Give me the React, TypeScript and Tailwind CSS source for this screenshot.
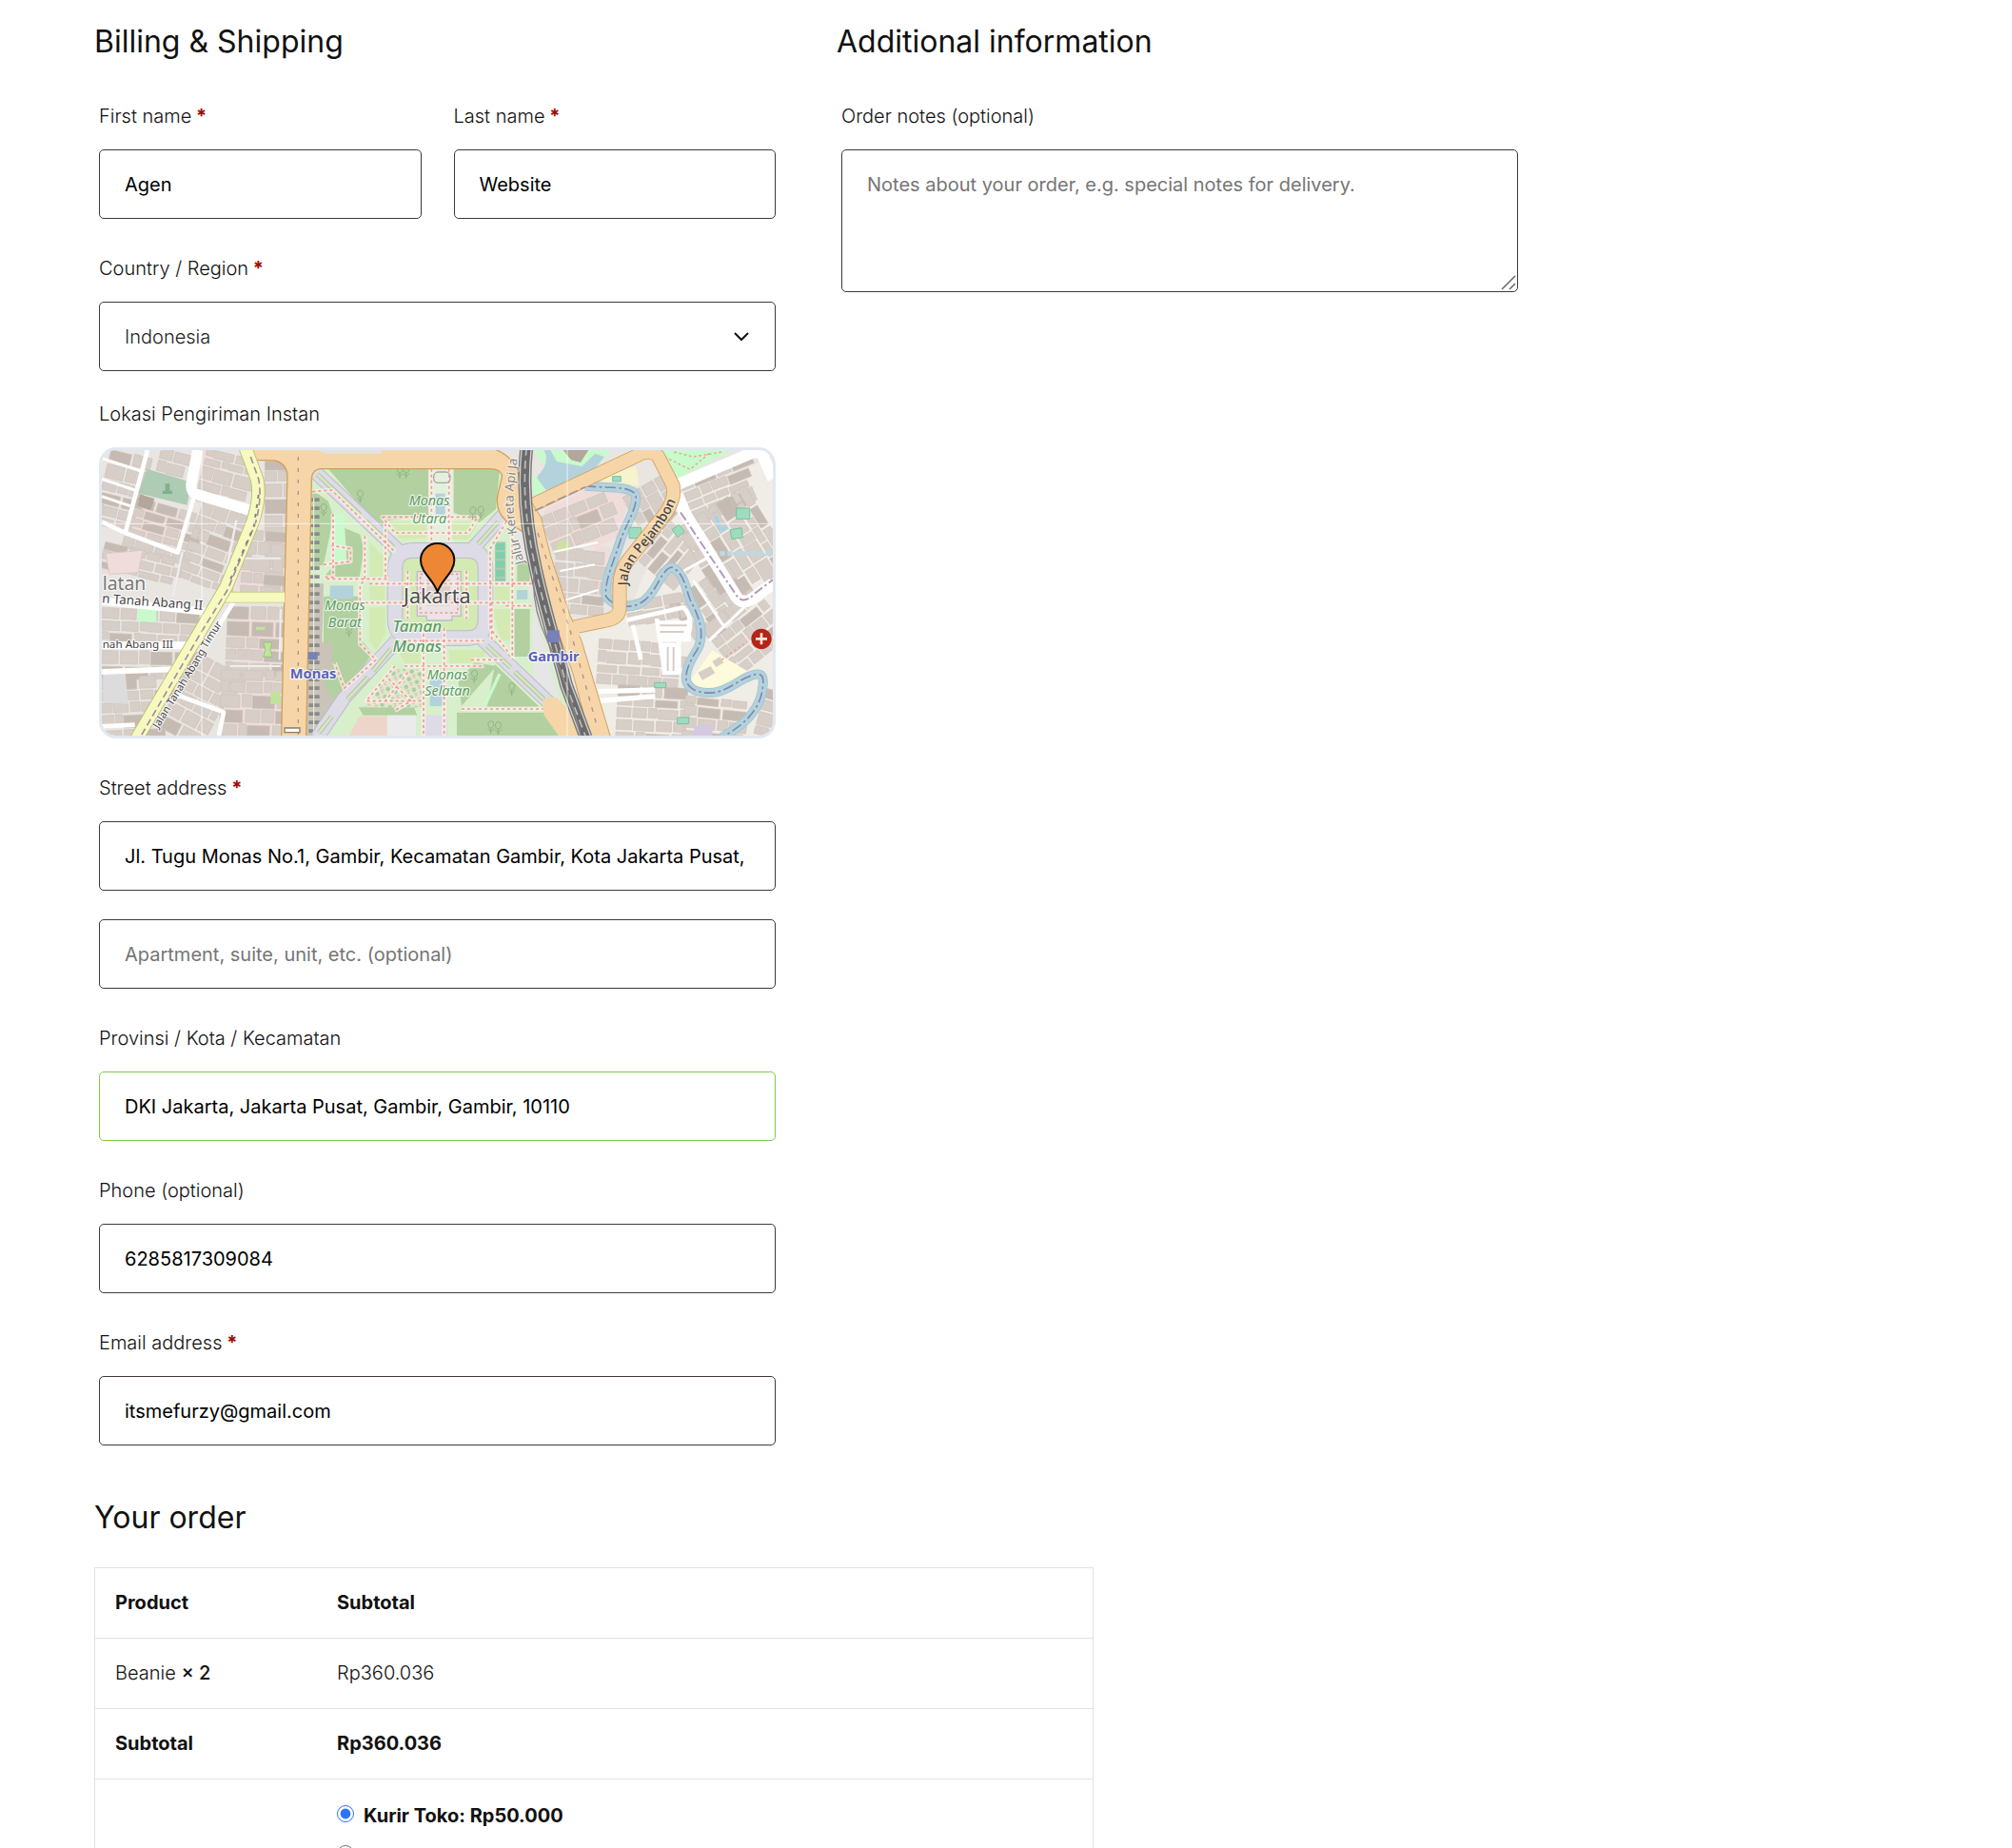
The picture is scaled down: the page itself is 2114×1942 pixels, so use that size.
import type { ReactNode } from "react";

const fieldClass =
  "h-[73px] w-full rounded-[5px] border border-[#43363a] bg-white px-[26px] text-xl text-black placeholder:text-[#757575] focus:outline-none";

type FieldProps = {
  id: string;
  label: string;
  required?: boolean;
  children: ReactNode;
};

const Field = ({ id, label, required, children }: FieldProps) => (
  <div className="flex flex-col gap-[19px]">
    <label htmlFor={id} className="text-xl leading-8 font-light text-[#111]">
      {label}
      {required && <span className="font-bold text-[#a00b00]"> *</span>}
    </label>
    {children}
  </div>
);

type Block = {
  x: number;
  y: number;
  w: number;
  h: number;
  angle: number;
  seed: number;
};

// City blocks, each filled with rows of small buildings
const blocks: Block[] = [
  { x: 36, y: 45, w: 125, h: 240, angle: 14, seed: 3 },
  { x: 120, y: 205, w: 190, h: 150, angle: 16, seed: 7 },
  { x: 215, y: 40, w: 90, h: 75, angle: 14, seed: 5 },
  { x: 350, y: 45, w: 140, h: 150, angle: 14, seed: 9 },
  { x: 310, y: 215, w: 160, h: 260, angle: 20, seed: 4 },
  { x: 36, y: 350, w: 230, h: 80, angle: 14, seed: 8 },
  { x: 36, y: 540, w: 300, h: 95, angle: 3, seed: 6 },
  { x: 36, y: 670, w: 240, h: 60, angle: 1, seed: 2 },
  { x: 36, y: 750, w: 180, h: 190, angle: -3, seed: 11 },
  { x: 550, y: 70, w: 62, h: 400, angle: 0, seed: 12 },
  { x: 480, y: 290, w: 120, h: 180, angle: 4, seed: 13 },
  { x: 430, y: 530, w: 170, h: 180, angle: 2, seed: 14 },
  { x: 270, y: 690, w: 140, h: 250, angle: 28, seed: 15 },
  { x: 410, y: 730, w: 180, h: 210, angle: 2, seed: 16 },
  { x: 1430, y: 210, w: 190, h: 110, angle: -22, seed: 17 },
  { x: 1460, y: 350, w: 150, h: 200, angle: 6, seed: 18 },
  { x: 1720, y: 110, w: 90, h: 160, angle: 60, seed: 19 },
  { x: 1720, y: 270, w: 160, h: 150, angle: -50, seed: 20 },
  { x: 1870, y: 100, w: 200, h: 110, angle: -22, seed: 21 },
  { x: 1900, y: 190, w: 240, h: 260, angle: 58, seed: 22 },
  { x: 1900, y: 400, w: 120, h: 200, angle: 55, seed: 23 },
  { x: 1960, y: 520, w: 190, h: 180, angle: -38, seed: 24 },
  { x: 1600, y: 640, w: 250, h: 130, angle: 4, seed: 25 },
  { x: 1660, y: 780, w: 220, h: 160, angle: 3, seed: 26 },
  { x: 1870, y: 820, w: 180, h: 120, angle: 6, seed: 27 },
  { x: 2110, y: 790, w: 60, h: 150, angle: 15, seed: 28 },
  { x: 1690, y: 500, w: 170, h: 80, angle: -10, seed: 29 },
];

const noise = (n: number) => {
  const v = Math.sin(n * 127.1) * 43758.5453;
  return v - Math.floor(v);
};

const CityBlock = ({ x, y, w, h, angle, seed }: Block) => {
  const cells: ReactNode[] = [];
  let top = y;
  let row = 0;
  while (top < y + h) {
    const rowH = 18 + noise(seed + row) * 28;
    let left = x;
    let col = 0;
    while (left < x + w) {
      const n = noise(seed * 31 + row * 17 + col);
      const cellW = 18 + n * 56;
      cells.push(
        <rect
          key={`${row}-${col}`}
          x={left}
          y={top + n * 5}
          width={cellW}
          height={rowH}
          fill={n > 0.82 ? "#c6bbb3" : "#d7cec8"}
          stroke="#cdc3bc"
          strokeWidth="2"
        />
      );
      left += cellW + 3 + n * 7;
      col += 1;
    }
    top += rowH + 8;
    row += 1;
  }
  return <g transform={`rotate(${angle} ${x + w / 2} ${y + h / 2})`}>{cells}</g>;
};

type RoadProps = {
  d: string;
  width: number;
  fill: string;
  edge: string;
};

const Road = ({ d, width, fill, edge }: RoadProps) => (
  <g fill="none" strokeLinejoin="round">
    <path d={d} stroke={edge} strokeWidth={width + 5} />
    <path d={d} stroke={fill} strokeWidth={width} />
  </g>
);

const canal =
  "M1560 152 C1620 160 1690 150 1715 175 C1735 200 1690 270 1672 320 C1650 390 1620 450 1625 500 C1650 535 1710 545 1750 510 C1790 475 1800 415 1832 408 C1880 430 1875 490 1900 530 C1930 590 1935 640 1905 680 C1870 740 1865 780 1910 798 C1980 820 2020 780 2060 760 C2100 740 2125 735 2120 780 C2115 850 2070 900 1990 945";

const railway = "M1375 30 C1360 160 1375 290 1405 420 C1430 540 1475 680 1500 780 L1562 945";

const monumentRing =
  "M1020 355 H1185 Q1245 355 1245 415 V570 Q1245 632 1185 632 H1020 Q960 632 960 570 V415 Q960 355 1020 355 Z";

const avenues =
  "M700 100 L970 355 M1300 245 L1205 350 M965 640 L800 820 L715 945 M1235 635 L1450 840";

const medians =
  "M715 115 L850 243 M868 262 L955 345 M1285 265 L1222 335 M948 665 L890 735 M875 755 L810 825 M760 880 L720 930 M1250 655 L1325 725 M1338 738 L1430 825";

const parkPaths = [
  "M700 170 L760 165 L960 360",
  "M765 240 V440 H735",
  "M735 400 L820 390 V350 L760 340",
  "M865 310 V440 L850 470 V650 L900 700 L800 790 L770 710",
  "M930 270 V440",
  "M745 445 H940",
  "M830 520 H1320",
  "M880 460 H1390",
  "M1075 98 V330 M1130 98 V330",
  "M920 250 H1220 L1190 300 H960 Z",
  "M1320 250 L1260 350 V600 L1320 680",
  "M1265 520 V640 M1330 300 V700",
  "M1310 460 H1390 M1310 530 H1390",
  "M965 640 H1240 M990 720 H1240",
  "M1050 600 V939 M1115 600 V939",
  "M960 720 L870 830 H1050",
  "M1170 855 H1430",
  "M940 760 L1010 830 L960 860 M1000 740 L930 830",
  "M1000 420 V570 M1185 420 V570",
  "M1200 700 L1300 700",
];

const trees = [
  [735, 230],
  [850, 187],
  [975, 110],
  [995, 110],
  [1205, 240],
  [1230, 238],
  [815, 610],
  [1210, 755],
  [1328, 795],
  [1262, 915],
  [1285, 918],
];

const DeliveryMap = () => (
  <svg
    viewBox="36 39 2115 900"
    preserveAspectRatio="xMidYMid slice"
    className="h-full w-full"
    fontFamily="'Noto Sans', sans-serif"
    role="img"
    aria-label="Peta Jakarta"
  >
    <defs>
      <path id="jalan-timur" d="M214 918 L345 706 Q400 600 450 545" />
      <path id="jalan-pejambon" d="M1693 466 C1690 400 1740 360 1775 315 Q1830 245 1850 185" />
      <path id="jalur-kereta" d="M1368 395 C1350 330 1325 240 1336 150 L1352 20" />
      <pattern id="garden" width="26" height="26" patternUnits="userSpaceOnUse" patternTransform="rotate(20)">
        <rect width="26" height="26" fill="#dfe9d0" />
        <circle cx="8" cy="8" r="7" fill="#a9cfa0" />
        <path d="M14 20 L22 14 M18 24 L25 22" stroke="#f19a90" strokeWidth="3" />
      </pattern>
    </defs>

    <rect x="36" y="39" width="2115" height="900" fill="#e9e5e1" />
    <path d="M1850 180 L2151 60 V939 H1640 L1500 600 L1700 540 Z" fill="#f0ece6" />

    {/* Pink and cream land use */}
    <g fill="#f0dcdb">
      <path d="M150 215 L305 245 L270 350 L120 300 Z" />
      <path d="M36 345 L180 370 L150 430 L36 430 Z" />
      <path d="M350 39 L400 39 L410 110 L350 120 Z" />
      <path d="M470 380 L600 400 V480 H460 Z" />
      <path d="M450 540 H600 V720 L440 700 Z" />
      <path d="M430 750 L590 740 V939 H420 Z" />
      <path d="M1430 230 L1560 165 L1700 175 L1670 310 L1600 340 L1450 340 Z" />
      <path d="M1590 330 L1640 350 L1610 500 L1580 480 Z" />
    </g>
    <path d="M1600 120 L1720 90 L1730 150 L1640 160 Z" fill="#f6f3cf" />

    {blocks.map((block) => (
      <CityBlock key={block.seed} {...block} />
    ))}

    <path d="M1885 775 L1960 670 L2070 735 L2010 780 L1930 795 Z" fill="#fdfbdc" />
    <path d="M1915 740 l40 -20 14 22 -40 22 Z M1960 705 l24 -14 12 18 -24 14 Z" fill="#d7cec8" />
    <path d="M178 98 L318 140 L305 212 L150 175 Z" fill="#aecbb4" />
    <path d="M236 145 h14 v22 h8 v10 h-30 v-10 h8 Z" fill="#7fb08b" />
    <path d="M148 532 H208 V580 H148 Z" fill="#c8facc" />
    <path d="M155 178 L202 192 L190 228 L150 215 Z" fill="#b3a69b" />
    <path d="M48 365 L165 355 L150 425 L60 430 Z" fill="#f0dcdb" stroke="#d6cccb" strokeWidth="3" />
    <path d="M40 745 L110 745 L120 840 L40 835 Z" fill="#dcdcdc" />
    <path d="M545 645 h28 l-6 22 6 24 h-28 l6 -24 Z" fill="#bfe39a" stroke="#9cc27a" strokeWidth="3" />
    <path d="M522 596 h28 v10 h-28 Z" fill="#bfe39a" />
    <path d="M568 800 h30 v40 h-30 Z" fill="#bfe39a" />
    <path d="M1475 325 h35 v35 h-45 Z" fill="#cfdfa5" />

    {/* White streets west */}
    <g fill="none" stroke="#fff" strokeWidth="14" strokeLinejoin="round">
      <path d="M180 39 L110 300 L36 265" />
      <path d="M110 300 L275 362 L325 190" />
      <path d="M36 65 L160 105 M36 130 L140 165 M36 185 L125 215" strokeWidth="9" />
      <path d="M36 515 L380 550 M36 655 H340" strokeWidth="24" />
      <path d="M36 738 L260 730" strokeWidth="18" />
      <path d="M270 810 L420 865 L405 939" />
      <path d="M36 910 L140 905" />
      <path d="M450 520 L400 600" />
      <path d="M290 360 L260 500 M460 260 L420 460" strokeWidth="7" stroke="#eee" />
      <path d="M480 380 H600 M440 720 H600 M600 540 L596 700" strokeWidth="6" stroke="#eee" />
      <path d="M338 39 L318 145 Q315 175 340 180 L500 228" strokeWidth="34" />
    </g>

    {/* Park */}
    <path d="M695 95 H1290 L1330 280 L1380 480 L1470 760 L1560 939 H680 Z" fill="#d8efcc" />
    <path d="M765 240 L800 240 L800 440 L770 440 Z" fill="#c8facc" />
    <path d="M1060 98 H1145 V330 H1060 Z" fill="#e4efdc" />
    <path d="M1400 540 L1440 700 L1480 830 L1400 760 L1390 600 Z" fill="#e6e6e6" />
    <g fill="#b3d0a0">
      <path d="M750 98 H1065 V245 L930 262 L915 290 Z" />
      <path d="M1145 98 H1290 L1278 225 L1225 268 L1145 236 Z" />
      <path d="M700 165 L750 200 L766 250 L735 400 L700 410 Z" />
      <path d="M802 285 L850 305 L862 350 L848 440 H735 L770 400 L808 390 Z" />
      <path d="M735 500 H848 L855 640 L890 680 L800 800 L770 830 L735 770 Z" />
      <path d="M1275 715 L1415 848 H1250 Z" />
      <path d="M1170 845 L1280 720 L1210 708 L1160 770 Z" />
      <path d="M1155 866 H1430 L1500 939 H1155 Z" />
      <path d="M1335 540 H1385 V690 H1335 Z" />
      <path d="M1345 390 H1385 V455 H1345 Z" />
      <path d="M690 840 L760 830 L740 900 L690 939 Z" />
      <path d="M845 850 H1020 L1030 875 H860 Z" />
    </g>
    <path d="M950 730 H1045 V850 H865 Z" fill="url(#garden)" />
    <g fill="#d3eab3">
      <path d="M935 265 H1060 V318 H975 Z" />
      <path d="M1140 265 H1225 L1190 320 H1140 Z" />
      <path d="M880 330 L930 380 V440 H880 Z" />
      <rect x="880" y="460" width="48" height="52" />
      <path d="M878 535 H930 V620 L900 670 L878 640 Z" />
      <rect x="1275" y="470" width="45" height="48" />
      <path d="M1270 540 H1330 V640 L1290 640 Z" />
      <path d="M970 665 H1040 V712 H990 Z M1130 670 H1250 L1230 710 H1130 Z" />
    </g>
    <g fill="#b4d2dc">
      <rect x="755" y="466" width="74" height="42" />
      <rect x="1088" y="176" width="30" height="66" />
      <rect x="1344" y="480" width="34" height="30" />
      <rect x="1070" y="760" width="44" height="86" />
    </g>
    <path d="M730 645 H762 V740 L735 760 L770 830 L800 830 L720 939 H680 V460 H735 Z" fill="#c9c3b8" />
    <path d="M735 760 Q790 700 795 770 L790 830 Q750 830 735 760 Z" fill="#b3d0a0" />
    <path d="M705 190 V939" stroke="#8b8b8b" strokeWidth="34" strokeDasharray="11 16" fill="none" />
    <path d="M704 190 V939" stroke="#e2e8d8" strokeWidth="4" fill="none" />

    <path d="M848 878 H935 V939 H815 Z" fill="#eed5ca" />
    <rect x="936" y="875" width="90" height="64" fill="#ebebeb" />
    <rect x="1050" y="875" width="75" height="64" fill="#dddbe8" />
    <rect x="1275" y="328" width="34" height="126" fill="#b8c4b8" />
    <path d="M1292 332 V450" stroke="#7fd0a8" strokeWidth="28" strokeDasharray="22 6" />

    {/* Monument ring and avenues */}
    <g fill="none">
      <path d={monumentRing} fill="#d3eab3" stroke="#bdbcc9" strokeWidth="50" />
      <path d={avenues} stroke="#bdbcc9" strokeWidth="46" />
      <path d={avenues} stroke="#dcdbe6" strokeWidth="40" />
      <path d={monumentRing} stroke="#dcdbe6" strokeWidth="44" />
      <path d={medians} stroke="#b5b9b3" strokeWidth="14" />
      <path d={medians} stroke="#d2e8b8" strokeWidth="9" />
    </g>
    <path
      d="M1030 422 H1060 V408 H1140 V422 H1168 V562 H1140 V576 H1060 V562 H1030 Z"
      fill="#ebe3e6"
      stroke="#bdbcc9"
      strokeWidth="4"
    />
    <rect x="1060" y="445" width="74" height="85" fill="#dcd0c8" />

    <g fill="none" strokeLinejoin="round">
      {parkPaths.map((d) => (
        <path key={d} d={d} stroke="#f5f0e8" strokeOpacity="0.75" strokeWidth="14" />
      ))}
      {parkPaths.map((d) => (
        <path key={d} d={d} stroke="#f39a90" strokeWidth="5" strokeDasharray="9 9" />
      ))}
      <rect x="1040" y="430" width="118" height="122" stroke="#f39a90" strokeWidth="5" strokeDasharray="8 8" />
      <rect x="1082" y="108" width="52" height="34" rx="14" stroke="#a8a8a0" strokeWidth="4" />
      <path d="M1245 840 L1290 745" stroke="#c8facc" strokeWidth="10" />
    </g>
    <g fill="none" stroke="#8fb489" strokeWidth="3">
      {trees.map(([x, y]) => (
        <path key={`${x}-${y}`} d={`M${x} ${y + 18} V${y} a9 11 0 1 1 1 0 M${x - 10} ${y + 2} L${x} ${y + 12} L${x + 10} ${y + 2}`} />
      ))}
    </g>

    {/* Water */}
    <path d="M1395 39 H1640 L1590 100 L1540 125 L1440 165 Q1400 170 1405 130 Q1425 110 1440 100 Z" fill="#c8facc" />
    <path
      d="M1430 39 Q1450 80 1410 120 Q1390 165 1430 165 Q1490 160 1500 140 L1580 110 L1620 60 L1590 50 L1550 90 L1470 75 L1450 39 Z"
      fill="#b4d2dc"
    />
    <path d="M1490 39 H1570 L1545 78 L1515 70 Z" fill="#b3a69b" />
    <path d="M1395 110 L1440 170 L1395 190 Z M1800 39 H2020 L1850 130 L1825 110 Z" fill="#c8facc" />
    <path d="M1810 60 L1890 100 L1950 50 M1840 45 L1900 60 L1990 45" fill="none" stroke="#f39a90" strokeWidth="4" strokeDasharray="8 8" />
    <g fill="none" strokeLinejoin="round">
      <path d={canal} stroke="#9ec4d2" strokeWidth="30" />
      <path d={canal} stroke="#b4d2dc" strokeWidth="25" />
      <path d={canal} stroke="#8089b0" strokeWidth="5" strokeDasharray="34 10 8 10" />
    </g>
    <path d="M1970 245 l16 45 20 -8" fill="none" stroke="#a9d3e6" strokeWidth="12" />
    <path d="M1960 365 H2151" stroke="#b9dbe8" strokeWidth="14" strokeDasharray="16 8" />

    {/* White streets east */}
    <g fill="none" stroke="#fff" strokeLinejoin="round">
      <path d="M1845 150 L2080 50 Q2115 35 2125 70 L2151 130" strokeWidth="36" />
      <path d="M1850 180 L1875 240 L2035 500 Q2055 530 2090 505 L2151 460" strokeWidth="38" />
      <path d="M1690 575 L1870 535 Q1895 560 1890 600 L1880 640 M1710 590 L1735 700 M1785 570 L1810 740 H1855 V640" strokeWidth="14" />
      <path d="M1790 580 H1890 V640 H1800 Z M1800 650 H1855 V745 H1805 Z" fill="#fff" strokeWidth="6" />
      <path d="M1600 800 L1780 795 M1600 830 L1780 815" strokeWidth="16" />
      <path d="M1900 450 L2000 600 M2060 535 L1950 640 M1870 420 L1960 370" strokeWidth="9" />
      <path d="M1460 360 L1600 330 M1470 520 L1600 480 M1480 420 L1590 400" strokeWidth="6" />
      <path d="M1860 235 L2035 495 Q2058 530 2095 490 L2151 448" stroke="#b399bd" strokeWidth="6" strokeDasharray="30 9 7 9" />
      <path d="M1795 592 H1880 M1795 612 H1870 M1820 660 V735 M1838 660 V735" stroke="#d6ccc6" strokeWidth="6" />
    </g>
    <g fill="#9ddcc0" stroke="#7cc0a2" strokeWidth="3">
      <path d="M1698 283 h38 v34 h-38 Z" />
      <path d="M1833 290 l22 -16 18 22 -22 18 Z" />
      <path d="M2036 222 h42 v34 h-42 Z" />
      <path d="M2016 290 l36 -6 4 30 -34 6 Z" />
      <path d="M1646 122 h26 v16 h-26 Z" />
      <path d="M1778 772 h36 v16 h-36 Z" />
      <path d="M1850 882 h36 v20 h-36 Z" />
    </g>
    <path d="M1905 910 L1960 905 V939 H1900 Z" fill="#d5c8e0" />
    <path d="M1990 700 L2060 650" stroke="#f39a90" strokeWidth="4" strokeDasharray="8 8" />

    {/* Main roads */}
    <Road
      d="M1380 218 L1720 58 Q1765 30 1790 60 L1836 150 Q1845 190 1815 235 L1700 380 Q1665 420 1668 480 V540 Q1665 570 1620 577 L1510 600"
      width={40}
      fill="#f6d6a8"
      edge="#cfa15d"
    />
    <path
      d="M1385 195 L1420 250 L1450 370 L1512 560 L1548 640 L1640 945 H1575 L1520 740 L1470 600 L1425 420 L1385 290 Z"
      fill="#f6d6a8"
      stroke="#cfa15d"
      strokeWidth="3"
    />
    <path
      d="M495 30 H1260 Q1345 60 1352 130 L1368 300 L1310 262 Q1275 230 1284 180 L1298 120 Q1292 98 1260 98 H730 Q695 98 697 140 L690 480 L680 945 H602 L612 480 L621 120 Q618 80 580 72 L520 70 Z"
      fill="#f6d6a8"
      stroke="#cfa15d"
      strokeWidth="4"
    />
    <path d="M1502 575 L1530 585 L1545 625 L1520 630 Z" fill="#f6d6a8" />
    <path d="M1425 835 Q1440 810 1470 820 L1500 850 L1545 945 H1480 L1430 875 Z" fill="#f6d6a8" />
    <path d="M715 39 H918 V50 H740 Z" fill="#e4e2df" />
    <path d="M655 60 V939" stroke="#b08f8f" strokeWidth="4" strokeDasharray="12 24" />
    <path d="M1410 300 L1510 600 L1600 920" fill="none" stroke="#b08f8f" strokeWidth="4" strokeDasharray="14 22" />
    <path d="M1400 230 L1560 155" stroke="#b08f8f" strokeWidth="5" strokeDasharray="30 10" />

    <Road d="M415 503 H612" width={30} fill="#f6fabf" edge="#c9cc88" />
    <Road
      d="M488 30 L525 130 Q538 190 510 270 L428 470 L340 620 L145 950"
      width={38}
      fill="#f6fabf"
      edge="#b9bd6e"
    />
    <path
      d="M505 60 L530 130 Q542 190 520 270 L432 480 L345 620 L160 939"
      fill="none"
      stroke="#a78ca0"
      strokeWidth="5"
      strokeDasharray="22 12"
    />
    <path d="M530 180 L515 280 L440 450" fill="none" stroke="#8c8088" strokeWidth="6" strokeDasharray="12 18" />
    <path d="M612 915 h48 v14 h-48 Z" fill="#fff" stroke="#8b7b6b" strokeWidth="4" />

    {/* Railway */}
    <g fill="none">
      <path d={railway} stroke="#777" strokeWidth="42" />
      <path d={railway} stroke="#cfcfcf" strokeWidth="34" />
      <path d={railway} stroke="#6b6b6b" strokeWidth="26" />
      <path d={railway} stroke="#bdbdbd" strokeWidth="5" strokeDasharray="26 16" />
      <path d="M1400 410 Q1385 520 1440 640 Q1500 760 1545 939" stroke="#888" strokeWidth="4" />
    </g>
    <rect x="1440" y="607" width="38" height="38" fill="#7a80b8" />
    <rect x="686" y="676" width="30" height="24" fill="#7a80b8" />

    {/* Tile seams */}
    <path d="M351 39 V939 M1503 39 V939 M36 271 H2151" stroke="#fff" strokeOpacity="0.7" strokeWidth="3" />

    <g stroke="#fff" strokeOpacity="0.75" strokeWidth="7" strokeLinejoin="round" paintOrder="stroke">
      <g fill="#444" fontSize="33">
        <text x="36" y="520" transform="rotate(4 36 520)" fontSize="40">n Tanah Abang II</text>
        <text x="38" y="664" fontSize="35">nah Abang III</text>
        <text>
          <textPath href="#jalan-timur">Jalan Tanah Abang Timur</textPath>
        </text>
        <text fontSize="42" fontWeight="500" strokeOpacity="0.2">
          <textPath href="#jalan-pejambon">Jalan Pejambon</textPath>
        </text>
      </g>
      <text fill="#888" fontSize="40" strokeOpacity="0.5">
        <textPath href="#jalur-kereta">Jalur Kereta Api Ja</textPath>
      </text>
      <text x="38" y="480" fontSize="58" fill="#777">latan</text>
      <g fill="#5a9c60" fontSize="43" fontStyle="italic" textAnchor="middle">
        <text x="1068" y="214">Monas</text>
        <text x="1068" y="269">Utara</text>
        <text x="802" y="542">Monas</text>
        <text x="802" y="597">Barat</text>
        <text x="1125" y="762">Monas</text>
        <text x="1125" y="814">Selatan</text>
        <text x="1030" y="611" fontSize="51" fontWeight="500">Taman</text>
        <text x="1030" y="675" fontSize="51" fontWeight="500">Monas</text>
      </g>
      <g fill="#5a62b8" fontSize="44" fontWeight="700" textAnchor="middle" strokeOpacity="0.9">
        <text x="702" y="760">Monas</text>
        <text x="1460" y="706">Gambir</text>
      </g>
      <text x="1093" y="521" fontSize="65" fill="#4d4d4d" textAnchor="middle">Jakarta</text>
    </g>

    <circle cx="2115" cy="634" r="32" fill="#b52418" />
    <path d="M2115 616 V652 M2097 634 H2133" stroke="#f3e6d8" strokeWidth="8" />

    {/* Delivery pin */}
    <path
      d="M1094 487 C1084 450 1041 425 1041 386 A53 53 0 1 1 1147 386 C1147 425 1104 450 1094 487 Z"
      fill="#ee8733"
      stroke="#0c0c0c"
      strokeWidth="6"
      strokeLinejoin="round"
    />
  </svg>
);

const orderRows = [{ name: "Beanie", quantity: 2, total: "Rp360.036" }];

const shippingMethods = [
  { id: "kurir-toko", label: "Kurir Toko: Rp50.000" },
  { id: "gosend-bike", label: "GoSend Bike Delivery" },
];

const cell = "border-b border-[#e2e2e2] px-[21px] text-left leading-[29px]";

const App = () => {
  return (
    <main className="h-screen overflow-hidden bg-white px-[99px] pt-6 font-['Inter',sans-serif] text-xl text-[#111]">
      <form>
        <div className="grid max-w-[1501px] grid-cols-2 gap-x-[59px]">
          {/* Billing */}
          <section>
            <h3 className="text-[32px] leading-10">Billing &amp; Shipping</h3>
            <div className="mt-[42px] flex flex-col gap-9 px-[5px]">
              <div className="grid grid-cols-2 gap-x-[34px]">
                <Field id="first-name" label="First name" required>
                  <input id="first-name" className={fieldClass} defaultValue="Agen" />
                </Field>
                <Field id="last-name" label="Last name" required>
                  <input id="last-name" className={fieldClass} defaultValue="Website" />
                </Field>
              </div>

              <div className="flex flex-col gap-[29px]">
                <Field id="country" label="Country / Region" required>
                  <div className="relative">
                    <select
                      id="country"
                      className="h-[73px] w-full appearance-none rounded-[5px] border border-[#43363a] bg-white px-[26px] text-xl font-light text-[#222]"
                    >
                      <option>Indonesia</option>
                    </select>
                    <svg
                      className="pointer-events-none absolute top-1/2 right-7 h-4 w-4 -translate-y-1/2"
                      viewBox="0 0 16 16"
                      fill="none"
                      stroke="#111"
                      strokeWidth="2"
                    >
                      <path d="M1 4 L8 11 L15 4" />
                    </svg>
                  </div>
                </Field>

                <div className="flex flex-col gap-[19px]">
                  <p className="leading-8 font-light">Lokasi Pengiriman Instan</p>
                  <div className="h-[306px] overflow-hidden rounded-[18px] border-[3px] border-[#e2e8f0]">
                    <DeliveryMap />
                  </div>
                </div>
              </div>

              <div className="flex flex-col gap-[30px]">
                <Field id="address-1" label="Street address" required>
                  <input
                    id="address-1"
                    className={fieldClass}
                    defaultValue="Jl. Tugu Monas No.1, Gambir, Kecamatan Gambir, Kota Jakarta Pusat, DKI Jakarta"
                  />
                </Field>
                <input
                  aria-label="Apartment, suite, unit, etc."
                  className={fieldClass}
                  placeholder="Apartment, suite, unit, etc. (optional)"
                />
              </div>

              <Field id="district" label="Provinsi / Kota / Kecamatan">
                <input
                  id="district"
                  className="h-[73px] w-full rounded-[5px] border border-[#7ccb4c] bg-white px-[26px] text-xl text-black focus:outline-none"
                  defaultValue="DKI Jakarta, Jakarta Pusat, Gambir, Gambir, 10110"
                />
              </Field>
              <Field id="phone" label="Phone (optional)">
                <input id="phone" type="tel" className={fieldClass} defaultValue="6285817309084" />
              </Field>
              <Field id="email" label="Email address" required>
                <input id="email" type="email" className={fieldClass} defaultValue="itsmefurzy@gmail.com" />
              </Field>
            </div>
          </section>

          {/* Order notes */}
          <section>
            <h3 className="text-[32px] leading-10">Additional information</h3>
            <div className="mt-[42px] px-[5px]">
              <Field id="notes" label="Order notes (optional)">
                <div className="relative h-[150px]">
                  <textarea
                    id="notes"
                    className="h-full w-full resize-none rounded-[5px] border border-[#43363a] bg-white px-[26px] py-5 text-xl leading-8 placeholder:text-[#757575] focus:outline-none"
                    placeholder="Notes about your order, e.g. special notes for delivery."
                  />
                  <svg
                    className="pointer-events-none absolute right-0.5 bottom-0.5 h-4 w-4"
                    viewBox="0 0 16 16"
                    stroke="#666"
                    strokeWidth="1.5"
                  >
                    <path d="M1 15 L15 1 M9 15 L15 9" />
                  </svg>
                </div>
              </Field>
            </div>
          </section>
        </div>

        <h3 className="mt-14 text-[32px] leading-10">Your order</h3>
        <table className="mt-8 w-full max-w-[1050px] border-separate border-spacing-0 border border-[#e2e2e2]">
          <thead>
            <tr>
              <th className={`${cell} w-[233px] py-[22px] font-bold`}>Product</th>
              <th className={`${cell} py-[22px] font-bold`}>Subtotal</th>
            </tr>
          </thead>
          <tbody>
            {orderRows.map((row) => (
              <tr key={row.name} className="font-light">
                <td className={`${cell} py-[22px]`}>
                  {row.name} <span className="font-medium">× {row.quantity}</span>
                </td>
                <td className={`${cell} py-[22px]`}>{row.total}</td>
              </tr>
            ))}
            <tr>
              <th className={`${cell} py-[22px] font-bold`}>Subtotal</th>
              <td className={`${cell} py-[22px] font-bold`}>Rp360.036</td>
            </tr>
            <tr>
              <th className={`${cell} py-6 font-bold`} aria-label="Shipping" />
              <td className={`${cell} py-6 font-bold`}>
                <ul className="flex flex-col gap-[13px]">
                  {shippingMethods.map((method, index) => (
                    <li key={method.id} className="flex items-start gap-2.5">
                      <input
                        type="radio"
                        id={method.id}
                        name="shipping"
                        defaultChecked={index === 0}
                        className="mt-[3px] size-[18px] accent-[#2f73f4]"
                      />
                      <label htmlFor={method.id}>{method.label}</label>
                    </li>
                  ))}
                </ul>
              </td>
            </tr>
          </tbody>
        </table>
      </form>
    </main>
  );
};

export default App;
